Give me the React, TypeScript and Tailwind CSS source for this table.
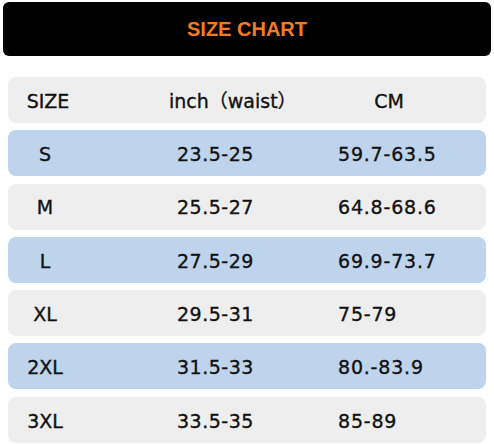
const ROWS = [
  { size: "S", inch: "23.5-25", cm: "59.7-63.5" },
  { size: "M", inch: "25.5-27", cm: "64.8-68.6" },
  { size: "L", inch: "27.5-29", cm: "69.9-73.7" },
  { size: "XL", inch: "29.5-31", cm: "75-79" },
  { size: "2XL", inch: "31.5-33", cm: "80.-83.9" },
  { size: "3XL", inch: "33.5-35", cm: "85-89" },
];

const cellFont = {
  fontFamily: '"DejaVu Sans", "Noto Sans CJK JP", sans-serif',
};

export default function App() {
  return (
    <main className="h-[444px] w-[494px] overflow-hidden bg-white px-[3px] pt-[2px]">
      {/* Başlık */}
      <header className="flex h-[54px] items-center justify-center rounded-[6px] bg-black">
        <h1
          className="text-[20px] font-bold text-[#f47c20]"
          style={{ fontFamily: '"Liberation Sans", Arial, sans-serif' }}
        >
          SIZE CHART
        </h1>
      </header>

      <section
        className="mt-[21px] flex flex-col gap-[7.3px] px-[5px] text-[19px] text-[#111] [-webkit-text-stroke:0.35px_#111]"
        style={cellFont}
      >
        <div className="flex h-[46px] items-center rounded-[8px] bg-[#eeeeee] pt-[2px]">
          <span className="w-[80px] text-center">SIZE</span>
          <span className="ml-[81px]">inch（waist）</span>
          <span className="mr-[82px] ml-auto">CM</span>
        </div>

        {ROWS.map((r, i) => (
          <div
            key={r.size}
            className={`flex h-[46px] items-center rounded-[8px] pt-[2px] ${
              i % 2 === 0 ? "bg-[#bed4ec]" : "bg-[#eeeeee]"
            }`}
          >
            <span className="w-[74px] text-center">{r.size}</span>
            <span className="ml-[95px] w-[161px] tracking-[0.5px]">{r.inch}</span>
            <span className="tracking-[0.8px]">{r.cm}</span>
          </div>
        ))}
      </section>
    </main>
  );
}
